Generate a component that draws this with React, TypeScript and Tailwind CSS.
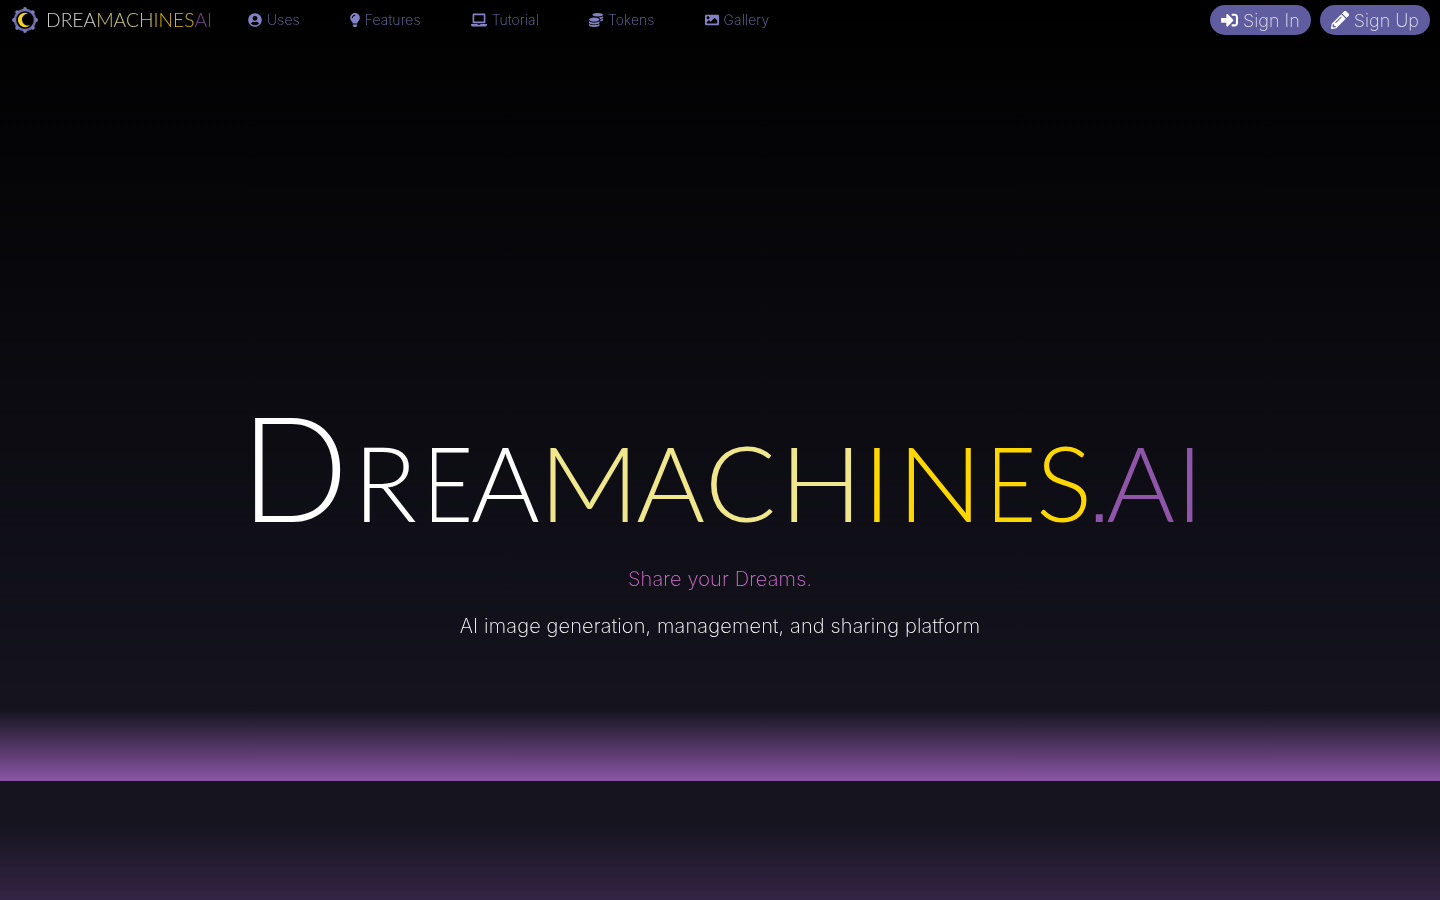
import type { ReactNode } from 'react'
import { FaCoins, FaImage, FaLaptop, FaLightbulb, FaPencilAlt, FaSignInAlt, FaUserCircle } from 'react-icons/fa'

const navItems = [
  { label: 'Uses', icon: <FaUserCircle className="h-3.5 w-3.5" /> },
  { label: 'Features', icon: <FaLightbulb className="h-3.5 w-[10px]" /> },
  { label: 'Tutorial', icon: <FaLaptop className="h-3.5 w-[16px]" /> },
  { label: 'Tokens', icon: <FaCoins className="h-3.5 w-3.5" /> },
  { label: 'Gallery', icon: <FaImage className="h-3.5 w-3.5" /> }
]

const white = 'text-white'
const khaki = 'text-[#f0e68c]'
const gold = 'text-[#ffd700]'
const purple = 'text-[#8e55a8]'

// glyph by glyph, the stand-in font has different side bearings from the original
const titleLetters = [
  { ch: 'R', className: `${white} ml-[5px]` },
  { ch: 'E', className: `${white} ml-[6px] w-[43px] origin-left scale-x-[0.82]` },
  { ch: 'A', className: `${white} ml-[5px]` },
  { ch: 'M', className: `${khaki} -ml-px origin-left scale-x-[1.05]` },
  { ch: 'A', className: `${khaki} ml-[2px]` },
  { ch: 'C', className: `${khaki} ml-0` },
  { ch: 'H', className: `${khaki} ml-[4px] origin-left scale-x-[1.04]` },
  { ch: 'I', className: `${gold} ml-[4px]` },
  { ch: 'N', className: `${gold} ml-[6px] origin-left scale-x-[1.08]` },
  { ch: 'E', className: `${gold} ml-[10px] w-[48px] origin-left scale-x-[0.82]` },
  { ch: 'S', className: `${gold} ml-[2px]` },
  { ch: '.', className: `${purple} -ml-[3px] font-['Liberation_Sans',sans-serif] text-[72px]` },
  { ch: 'A', className: `${purple} -ml-[3px]` },
  { ch: 'I', className: `${purple} ml-[1px]` }
]

function LogoMark() {
  const teeth = [0, 45, 90, 135, 180, 225, 270, 315]
  return (
    <svg viewBox="0 0 26 26" className="h-[26px] w-[26px] shrink-0">
      <circle cx="13" cy="13" r="10" fill="none" stroke="#6c69a8" strokeWidth="2.4" />
      {teeth.map((deg) => (
        <circle key={deg} cx="13" cy="1.9" r="1.9" fill="#7d7ab8" transform={`rotate(${deg} 13 13)`} />
      ))}
      <path d="M16.5 6.6a7.2 7.2 0 1 0 1.5 11.6a6 6 0 1 1-1.5-11.6z" fill="#f2d21f" />
    </svg>
  )
}

function PillButton({ icon, children }: { icon: ReactNode; children: ReactNode }) {
  return (
    <a className="flex h-[30px] items-center gap-[5px] rounded-full bg-[#5f5ca0] px-[11px] text-[18px] font-[250] text-[#e0e0ec]">
      <span className="text-white">{icon}</span>
      {children}
    </a>
  )
}

export default function App() {
  return (
    <div className="flex h-screen flex-col overflow-hidden bg-black font-['Inter',sans-serif]">
      <div className="flex h-[781px] flex-col bg-[linear-gradient(to_bottom,#000_0%,#15141f_92%)]">
        <header className="flex h-10 items-center pl-3 pr-[10px] will-change-transform">
          <LogoMark />
          <span className="ml-2 w-[166px] whitespace-nowrap font-['Lato',sans-serif] text-[19.2px] font-light tracking-[0.05px] opacity-85">
            <span className="text-[#f2f2f2]">DREA</span>
            <span className={khaki}>MACH</span>
            <span className={gold}>INES</span>
            <span className={purple}>AI</span>
          </span>
          <nav className="ml-9 flex items-center gap-[50px]">
            {navItems.map((item) => (
              <a key={item.label} className="flex items-center gap-[5px] text-sm font-[250] tracking-[0.1px] text-[#7471b0]">
                <span className="text-[#8583c8]">{item.icon}</span>
                <span className="whitespace-nowrap">{item.label}</span>
              </a>
            ))}
          </nav>
          <div className="flex-1" />
          <div className="flex items-center gap-[9px]">
            <PillButton icon={<FaSignInAlt className="h-[18px] w-[17px]" />}>Sign In</PillButton>
            <PillButton icon={<FaPencilAlt className="h-[18px] w-[18px]" />}>Sign Up</PillButton>
          </div>
        </header>

        <main className="flex flex-1 flex-col items-center will-change-transform">
          <h1 className="mt-[352px] flex h-[130px] items-baseline justify-center whitespace-nowrap font-['Lato',sans-serif] text-[105px] font-light leading-none">
            <span className={`inline-block origin-right scale-x-[0.97] text-[147px] ${white}`}>D</span>
            {titleLetters.map((letter, i) => (
              <span key={i} className={`inline-block ${letter.className}`}>
                {letter.ch}
              </span>
            ))}
          </h1>
          <p className="mt-[43px] text-[20px] font-[250] leading-[28px] tracking-[0.15px] text-[#da70d6]">Share your Dreams.</p>
          <p className="mt-[19px] text-[20px] font-[250] leading-[28px] tracking-[0.15px] text-white">
            AI image generation, management, and sharing platform
          </p>
        </main>

        <div className="h-[71px] bg-gradient-to-b from-transparent to-[#8a55a5]" />
      </div>
      <div className="flex-1 bg-[linear-gradient(to_bottom,#15141f_0%,#15141f_35%,#342444_100%)]" />
    </div>
  )
}
